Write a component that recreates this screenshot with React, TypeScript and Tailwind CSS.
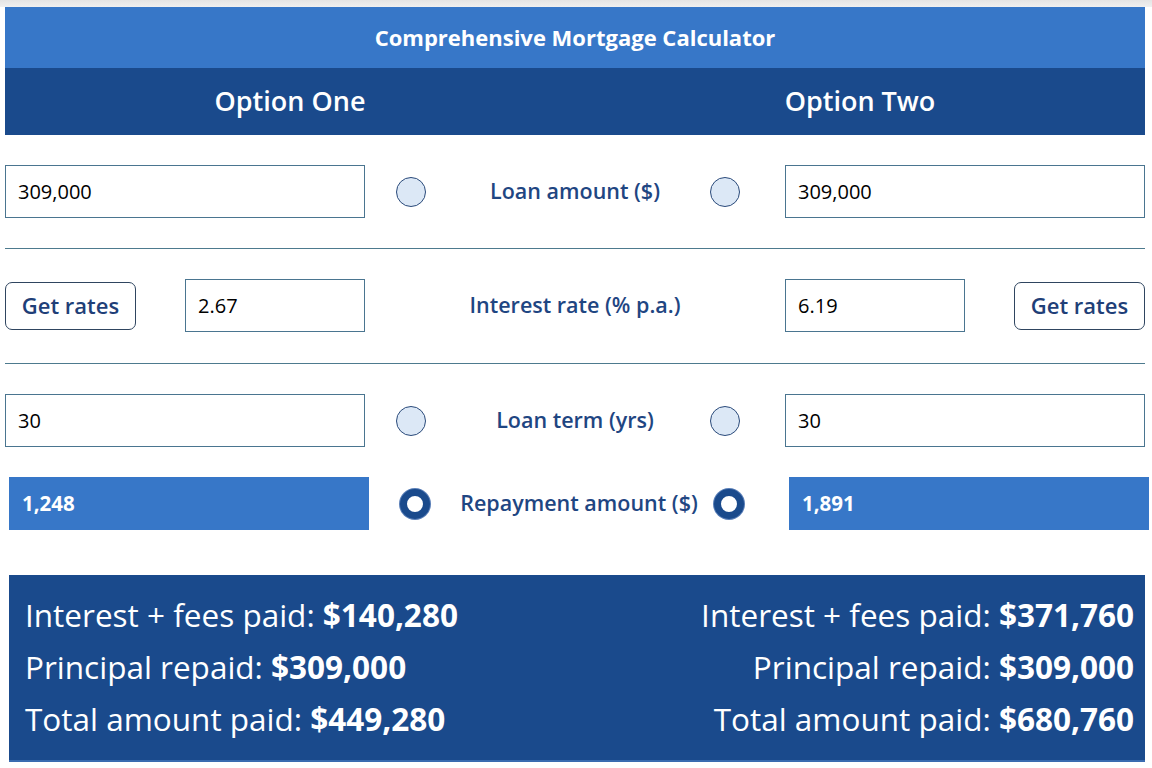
const font = { fontFamily: '"Open Sans", Lato, sans-serif' };

function Radio({ checked }: { checked?: boolean }) {
  if (checked) {
    return (
      <div className="w-[30px] h-[30px] rounded-full border-[7px] border-[#1a4a8c] bg-white shadow-[0_0_0_1px_#5a7fb8]" />
    );
  }
  return <div className="w-[30px] h-[30px] rounded-full border border-[#2a4a7a] bg-[#dce8f6]" />;
}

function TextBox({ value, w }: { value: string; w: string }) {
  return (
    <div className={`${w} h-[53px] border border-[#4a7590] bg-white flex items-center px-[12px] text-[20px] text-black`}>
      {value}
    </div>
  );
}

function GetRates() {
  return (
    <button className="w-[131px] h-[48px] rounded-[7px] border border-[#2f4560] bg-white text-[22px] font-semibold text-[#1f3f78]">
      Get rates
    </button>
  );
}

function Middle({ label, checked }: { label: string; checked?: boolean }) {
  return (
    <div className="flex-1 grid grid-cols-[75px_1fr_75px] items-center">
      <div className="pl-[31px]">
        <Radio checked={checked} />
      </div>
      <div className="text-center text-[21.5px] font-semibold text-[#1f4682]">{label}</div>
      <div className="justify-self-start">
        <Radio checked={checked} />
      </div>
    </div>
  );
}

function Divider() {
  return <div className="h-px bg-[#4d7a8e]" />;
}

export default function App() {
  return (
    <div className="min-h-[768px] bg-white" style={font}>
      <div className="h-[7px] bg-gradient-to-b from-[#e4e4e4] to-[#f0f0f0]" />
      <div className="w-[1140px] ml-[5px]">
        <div className="h-[61px] bg-[#3777c8] flex items-center justify-center text-white text-[22px] font-bold">
          Comprehensive Mortgage Calculator
        </div>
        <div className="h-[67px] bg-[#1a4a8c] grid grid-cols-2 items-center text-white text-[27px] font-semibold text-center">
          <div>Option One</div>
          <div>Option Two</div>
        </div>

        <div className="pt-[30px] flex items-center">
          <TextBox value="309,000" w="w-[360px]" />
          <Middle label="Loan amount ($)" />
          <TextBox value="309,000" w="w-[360px]" />
        </div>
        <div className="pt-[30px]">
          <Divider />
        </div>

        <div className="pt-[30px] flex items-center">
          <div className="w-[360px] flex items-center justify-between">
            <GetRates />
            <TextBox value="2.67" w="w-[180px]" />
          </div>
          <div className="flex-1 text-center text-[21.5px] font-semibold text-[#1f4682]">Interest rate (% p.a.)</div>
          <div className="w-[360px] flex items-center justify-between">
            <TextBox value="6.19" w="w-[180px]" />
            <GetRates />
          </div>
        </div>
        <div className="pt-[31px]">
          <Divider />
        </div>

        <div className="pt-[30px] flex items-center">
          <TextBox value="30" w="w-[360px]" />
          <Middle label="Loan term (yrs)" />
          <TextBox value="30" w="w-[360px]" />
        </div>

        <div className="pt-[30px] ml-[4px] mr-[-4px] flex items-center">
          <div className="w-[360px] h-[53px] bg-[#3777c8] flex items-center px-[13px] text-white text-[20.5px] font-bold">
            1,248
          </div>
          <Middle label="Repayment amount ($)" checked />
          <div className="w-[360px] h-[53px] bg-[#3777c8] flex items-center px-[13px] text-white text-[20.5px] font-bold">
            1,891
          </div>
        </div>

        <div className="mt-[45px] ml-[4px] bg-[#1a4a8c] border-b-2 border-[#3a6bb0] pt-[14px] pb-[15px] pl-[16px] pr-[11px] grid grid-cols-2 text-white text-[31.5px] leading-[52px]">
          <div>
            <div>Interest + fees paid: <span className="font-bold">$140,280</span></div>
            <div>Principal repaid: <span className="font-bold">$309,000</span></div>
            <div>Total amount paid: <span className="font-bold">$449,280</span></div>
          </div>
          <div className="text-right">
            <div>Interest + fees paid: <span className="font-bold">$371,760</span></div>
            <div>Principal repaid: <span className="font-bold">$309,000</span></div>
            <div>Total amount paid: <span className="font-bold">$680,760</span></div>
          </div>
        </div>
      </div>
    </div>
  );
}
